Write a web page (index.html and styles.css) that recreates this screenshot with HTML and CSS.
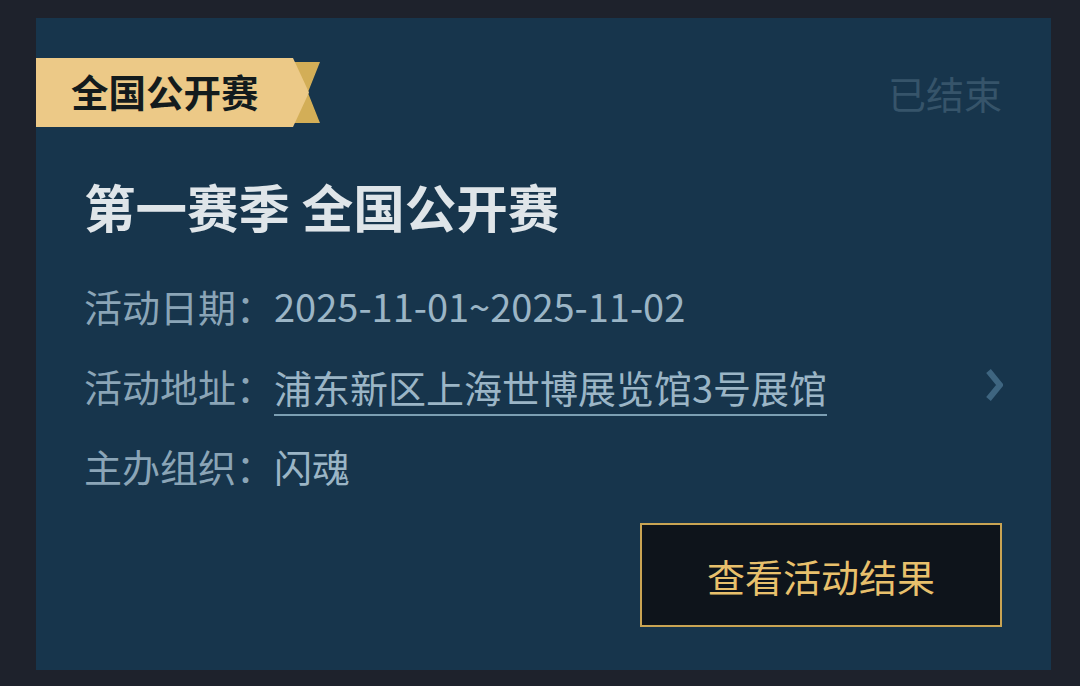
FILE: index.html
```html
<!DOCTYPE html>
<html lang="zh-CN">
<head>
  <meta charset="UTF-8">
  <meta name="viewport" content="width=device-width, initial-scale=1.0">
  <title>第一赛季 全国公开赛</title>
  <link rel="stylesheet" href="styles.css">
</head>

<body>
  <div class="card">
    <div class="head">
      <div class="tag">
        <div class="tag-body">全国公开赛</div>
      </div>
      <span class="status">已结束</span>
    </div>

    <div class="main">
      <h1 class="title">第一赛季 全国公开赛</h1>

      <div class="row">
        <span class="label">活动日期：</span>
        <span class="value">2025-11-01~2025-11-02</span>
      </div>
      <div class="row">
        <span class="label">活动地址：</span>
        <span class="value link">浦东新区上海世博展览馆3号展馆</span>
        <svg class="arrow" width="17" height="32" viewBox="0 0 17 32">
          <polyline points="2.5,2 14,16 2.5,30" fill="none" stroke="#3e6580" stroke-width="6"/>
        </svg>
      </div>
      <div class="row">
        <span class="label">主办组织：</span>
        <span class="value">闪魂</span>
      </div>

      <div class="actions">
        <button class="btn">查看活动结果</button>
      </div>
    </div>
  </div>
</body>
</html>
```

FILE: styles.css
```css
*{
  margin: 0;
  padding: 0;
  box-sizing: border-box;
}
body{
  background: #1e222c;
  padding: 18px 0 0 36px;
  font-family: "Noto Sans CJK SC", "Noto Sans", sans-serif;
}
.card{
  width: 1015px;
  height: 652px;
  background: #17354c;
  padding: 40px 0 43px 0;
}
.head{
  display: flex;
  align-items: center;
  justify-content: space-between;
  height: 69px;
}
.tag{
  position: relative;
  width: 273px;
  height: 69px;
}
/* folded tail behind the ribbon */
.tag::before{
  content: '';
  position: absolute;
  left: 257px;
  top: 4px;
  width: 27px;
  height: 61px;
  background: #d3ae57;
  clip-path: polygon(0 0, 100% 0, 55% 50%, 100% 100%, 0 100%);
}
.tag-body{
  position: relative;
  height: 100%;
  background: #ecc987;
  clip-path: polygon(0 0, 257px 0, 100% 50%, 257px 100%, 0 100%);
  display: flex;
  align-items: center;
  padding: 0 0 4px 35px;
  font-size: 37.5px;
  font-weight: 700;
  color: #131b1d;
}
.status{
  margin-right: 49px;
  font-size: 38px;
  line-height: 1;
  color: #36546a;
}
.main{
  padding: 0 49px 0 48px;
}
.title{
  margin-top: 48px;
  font-size: 51.5px;
  line-height: 62px;
  font-weight: 700;
  color: #dfe5e9;
}
.row{
  display: flex;
  align-items: center;
  height: 80px;
  font-size: 38px;
}
.row:first-of-type{
  margin-top: 28px;
}
.label{
  color: #8ba5b7;
}
.value{
  color: #9bb5c6;
}
.link{
  display: inline-block;
  line-height: 38px;
  padding-bottom: 8px;
  border-bottom: 2px solid #7c9fb3;
  margin-top: 14px;
}
.arrow{
  margin-left: auto;
  margin-right: -1px;
}
.actions{
  display: flex;
  justify-content: flex-end;
  margin-top: 18px;
}
.btn{
  width: 362px;
  height: 104px;
  background: #0e141b;
  border: 2px solid #c9a453;
  color: #e8c06c;
  font-family: inherit;
  font-size: 38px;
}
```
